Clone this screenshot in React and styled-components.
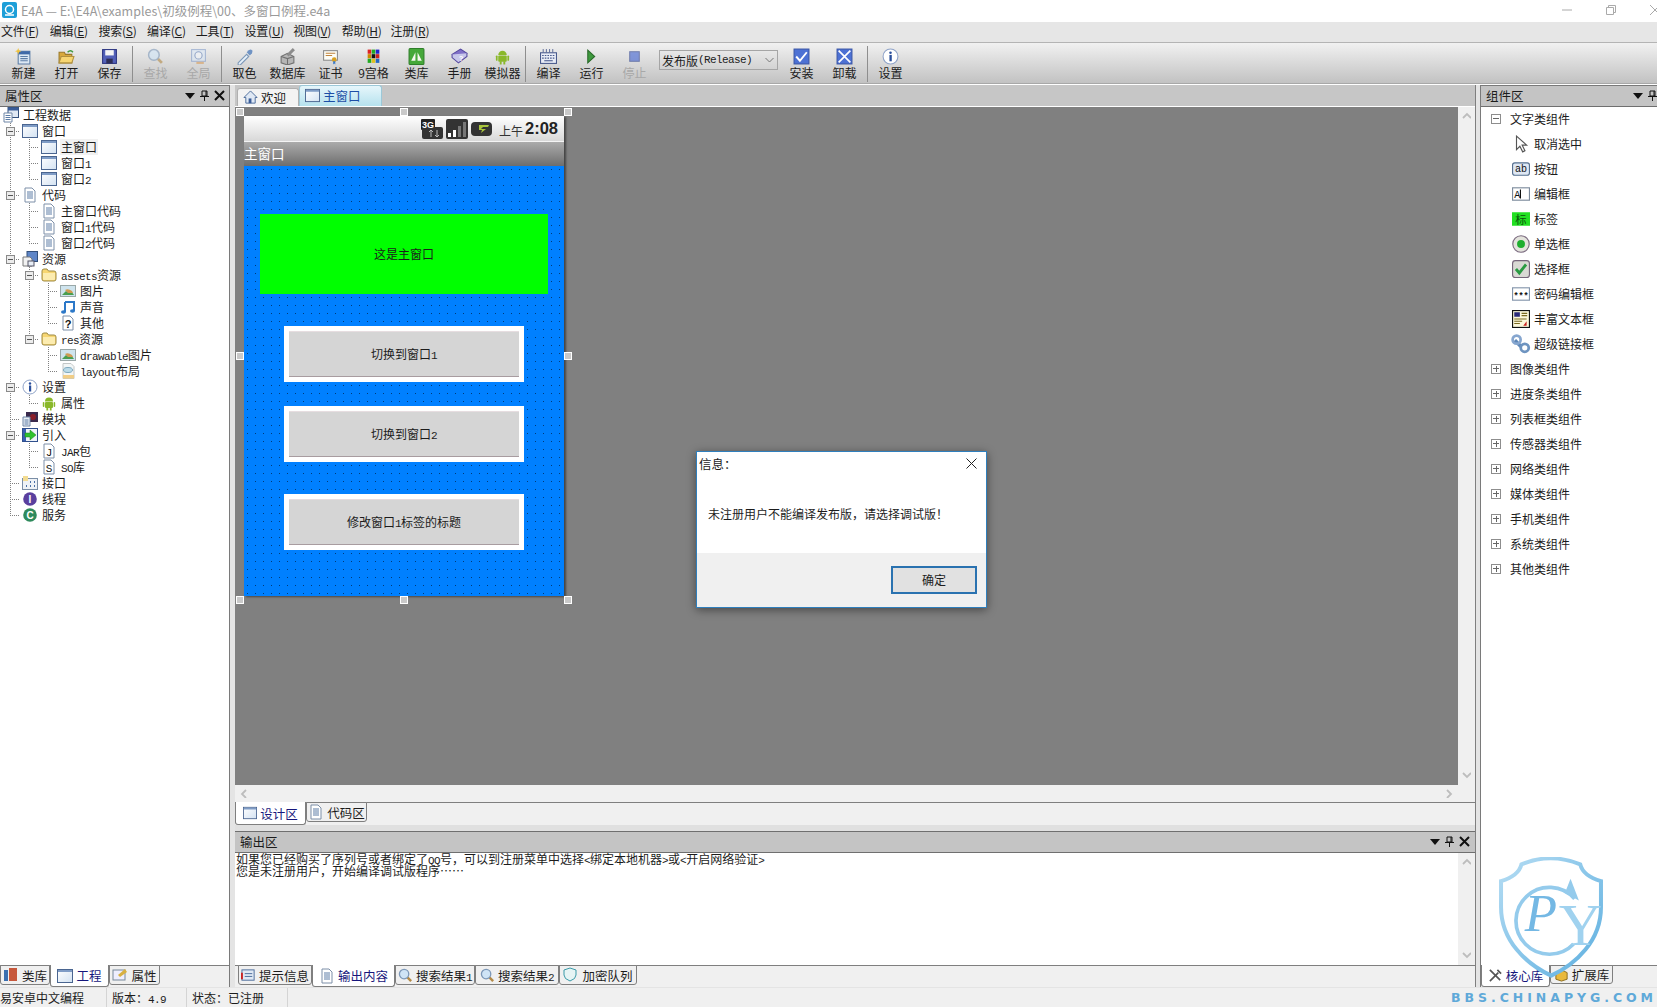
import React from 'react';
import styled, { createGlobalStyle } from 'styled-components';

const GlobalStyle = createGlobalStyle`
  html, body { margin: 0; padding: 0; background: #f0f0f0; }
  body { font-family: "Noto Sans CJK SC", "Liberation Sans", sans-serif; font-size: 12px; color: #1c1c1c; }
  * { box-sizing: border-box; }
`;

const Page = styled.div`
  position: relative;
  width: 1657px;
  height: 1007px;
  overflow: hidden;
  display: flex;
  flex-direction: column;
`;

const TitleBar = styled.div`
  height: 22px;
  background: #fff;
  display: flex;
  align-items: center;
  padding: 0 0 2px 2px;
  gap: 4px;
  color: #9a9a9a;
  font-size: 12.5px;
`;

const WindowButtons = styled.div`
  margin-left: auto;
  display: flex;
  align-items: center;
  gap: 34px;
  margin-right: -3px;
`;

const MenuBar = styled.div`
  height: 21px;
  background: #e6e6e6;
  border-bottom: 1px solid #b4b4b4;
  display: flex;
  align-items: center;
  padding: 0 0 3px 1px;
`;

const MenuItem = styled.span`
  width: 48.7px;
  white-space: nowrap;
  font-size: 12px;
  letter-spacing: -0.2px;
`;

const ToolBar = styled.div`
  height: 41px;
  flex: none;
  margin-bottom: 1px;
  background: linear-gradient(#f1f1f1, #c2c2c2);
  border-bottom: 1px solid #a8a8a8;
  box-shadow: 0 1px 0 #fff;
  display: flex;
  align-items: flex-start;
  padding-left: 2px;
`;

const ToolButton = styled.div`
  width: 43px;
  height: 40px;
  display: flex;
  flex-direction: column;
  align-items: center;
  padding-top: 5px;
  color: ${(p) => (p.$off ? '#a8a8a8' : '#1c1c1c')};
  svg { width: 17px; height: 17px; opacity: ${(p) => (p.$off ? 0.6 : 1)}; }
`;

const ToolLabel = styled.span`
  line-height: 15px;
  white-space: nowrap;
`;

const ToolSep = styled.div`
  width: 1px;
  height: 36px;
  margin: 3px 1px 0;
  background: #8e8e8e;
`;

const Combo = styled.div`
  width: 119px;
  height: 20px;
  margin: 7px 2px 0 3px;
  border: 1px solid #a5a5a5;
  display: flex;
  align-items: center;
  padding-left: 2px;
  white-space: nowrap;
  svg { margin-left: auto; margin-right: 3px; }
`;

const Mono = styled.span`
  font-family: "Liberation Mono", monospace;
  font-size: 11px;
  letter-spacing: -0.6px;
  line-height: 0;
`;

const Workspace = styled.div`
  flex: 1;
  display: flex;
  min-height: 0;
  background: #e4e4e4;
`;

const SidePanel = styled.div`
  width: ${(p) => p.$w}px;
  flex: none;
  display: flex;
  flex-direction: column;
  background: #fff;
  border-right: ${(p) => (p.$right ? 0 : '1px solid #7a7a7a')};
  border-left: ${(p) => (p.$right ? '1px solid #7a7a7a' : 0)};
  border-top: 1px solid #7a7a7a;
  overflow: hidden;
`;

const Gutter = styled.div`
  width: ${(p) => p.$w}px;
  flex: none;
`;

const PanelHeader = styled.div`
  height: 21px;
  flex: none;
  background: #c4c4c4;
  border-bottom: 1px solid #6f6f6f;
  display: flex;
  align-items: center;
  justify-content: space-between;
  padding: 0 4px 1px 5px;
  font-size: 12.5px;
`;

const DockButtons = styled.div`
  display: flex;
  align-items: center;
  gap: 4px;
  flex: none;
  margin-right: ${(p) => p.$bleed || 0}px;
`;

const TreeArea = styled.div`
  flex: 1;
`;

const TreeRow = styled.div`
  height: 16px;
  display: flex;
  align-items: center;
  padding-left: 1px;
`;

const dots = 'repeating-linear-gradient(to bottom, #808080 0 1px, transparent 1px 2px)';
const dotsH = 'repeating-linear-gradient(to right, #808080 0 1px, transparent 1px 2px)';

const GuideCell = styled.div`
  width: 19px;
  height: 16px;
  flex: none;
  display: flex;
  align-items: center;
  justify-content: center;
  background-repeat: no-repeat;
  background-image: ${(p) => {
    const k = p.$kind;
    const layers = [];
    if ('ITB'.includes(k)) layers.push(dots);
    if ('LK'.includes(k)) layers.push(dots);
    if ('TLBK'.includes(k)) layers.push(dotsH);
    return layers.length ? layers.join(',') : 'none';
  }};
  background-size: ${(p) => {
    const k = p.$kind;
    if ('ITB'.includes(k)) return '1px 100%, 10px 1px';
    if ('LK'.includes(k)) return '1px 8px, 10px 1px';
    return 'auto';
  }};
  background-position: 9px 0, 9px 8px;
`;

const Expander = styled.span`
  width: 9px;
  height: 9px;
  border: 1px solid #8a8a8a;
  background: #ececec;
  display: flex;
  align-items: center;
  justify-content: center;
  &::before { content: ''; width: 5px; height: 1px; background: #555; }
`;

const IconCell = styled.div`
  width: 19px;
  height: 16px;
  flex: none;
  display: flex;
  align-items: center;
  justify-content: center;
`;

const TreeLabel = styled.span`
  margin-left: 2px;
  padding: 0 1px;
  line-height: 16px;
  white-space: nowrap;
  background: ${(p) => (p.$on ? '#f1f1f1' : 'transparent')};
`;

const TabRow = styled.div`
  height: ${(p) => p.$h || 22}px;
  flex: none;
  display: flex;
  align-items: flex-start;
  background: #f0f0f0;
  border-top: 1px solid #7f7f7f;
  padding-left: ${(p) => p.$pad || 0}px;
`;

const BottomTab = styled.div`
  width: ${(p) => p.$w}px;
  height: ${(p) => (p.$on ? p.$tall || 22 : (p.$tall || 22) - 2)}px;
  margin-top: -1px;
  display: flex;
  align-items: center;
  justify-content: center;
  gap: 3px;
  white-space: nowrap;
  background: ${(p) => (p.$on ? '#fff' : '#f0f0f0')};
  color: ${(p) => (p.$on ? '#16167c' : '#1c1c1c')};
  border: 1px solid #7f7f7f;
  border-top: ${(p) => (p.$on ? '0' : '1px solid #7f7f7f')};
  border-radius: 0 0 3px 3px;
  font-size: 12.5px;
`;

const Center = styled.div`
  width: 1241px;
  flex: none;
  display: flex;
  flex-direction: column;
  border-right: 1px solid #7f7f7f;
`;

const DocStrip = styled.div`
  height: 22px;
  flex: none;
  background: #c6c6c6;
  border-bottom: 1px solid #fff;
  display: flex;
  align-items: flex-end;
  padding-left: 2px;
`;

const DocTab = styled.div`
  width: ${(p) => p.$w}px;
  height: ${(p) => (p.$on ? 21 : 18)}px;
  display: flex;
  align-items: center;
  gap: 3px;
  padding: 0 0 1px 5px;
  border: 1px solid ${(p) => (p.$on ? '#9cc8d8' : '#b0b0b0')};
  border-bottom: 0;
  border-radius: 3px 3px 0 0;
  background: ${(p) => (p.$on ? 'linear-gradient(#e6f6fb, #b6e2ee)' : '#f3f3f3')};
  color: ${(p) => (p.$on ? '#1c4ea6' : '#1c1c1c')};
  font-size: 12.5px;
`;

const DesignRow = styled.div`
  height: 678px;
  flex: none;
  display: flex;
`;

const Canvas = styled.div`
  position: relative;
  flex: 1;
  background: #808080;
  padding: 9px 0 0 9px;
`;

const ScrollV = styled.div`
  width: 17px;
  flex: none;
  background: #f0f0f0;
  display: flex;
  flex-direction: column;
  align-items: center;
  justify-content: space-between;
  padding: 5px 0;
`;

const ScrollH = styled.div`
  height: 17px;
  flex: none;
  background: #f0f0f0;
  display: flex;
  align-items: center;
  justify-content: space-between;
  padding: 0 21px 0 5px;
`;

const Phone = styled.div`
  position: relative;
  width: 320px;
  height: 480px;
  display: flex;
  flex-direction: column;
  box-shadow: 2px 1px 2px #444;
`;

const Handle = styled.span`
  position: absolute;
  left: ${(p) => p.$x}px;
  top: ${(p) => p.$y}px;
  width: 8px;
  height: 8px;
  background: #c9c9c9;
  border: 1px solid #fff;
`;

const PhoneStatus = styled.div`
  height: 25px;
  flex: none;
  background: linear-gradient(#fff, #d8d8d8);
  display: flex;
  align-items: center;
  justify-content: flex-end;
  gap: 3px;
  padding-right: 6px;
`;

const AmPm = styled.span`
  font-size: 12px;
  margin: 3px -1px 0 3px;
  color: #333;
`;

const Clock = styled.span`
  font-family: "Liberation Sans", sans-serif;
  font-weight: bold;
  font-size: 16.5px;
  color: #222;
`;

const PhoneTitle = styled.div`
  height: 25px;
  flex: none;
  background: linear-gradient(#ababab, #6e6e6e);
  color: #fff;
  font-size: 13.5px;
  line-height: 22px;
  border-top: 1px solid #f4f4f4;
`;

const PhoneBody = styled.div`
  flex: 1;
  background-color: #0080ff;
  background-image: radial-gradient(circle at 3.5px 3.5px, #003a78 0.8px, transparent 1px);
  background-size: 8px 8px;
  display: flex;
  flex-direction: column;
  align-items: center;
`;

const GreenLabel = styled.div`
  width: 288px;
  height: 80px;
  margin-top: 48px;
  padding-bottom: 2px;
  background: #00ff00;
  display: flex;
  align-items: center;
  justify-content: center;
`;

const FormButton = styled.div`
  width: 240px;
  height: 56px;
  margin-top: ${(p) => p.$top}px;
  padding-bottom: 2px;
  background: #d5d5d5;
  border: 5px solid #fff;
  display: flex;
  align-items: center;
  justify-content: center;
  box-shadow: inset 0 1px 0 #e6dde0, inset 0 -1px 0 #a89ca0;
`;

const Dialog = styled.div`
  position: absolute;
  left: 461px;
  top: 344px;
  width: 291px;
  height: 157px;
  background: #fff;
  border: 1px solid #2f7fbd;
  box-shadow: 0 2px 9px rgba(0, 0, 0, 0.45);
  display: flex;
  flex-direction: column;
`;

const DialogTop = styled.div`
  height: 24px;
  display: flex;
  align-items: center;
  justify-content: space-between;
  padding: 0 9px 2px 2px;
  font-size: 12.5px;
`;

const DialogText = styled.div`
  flex: 1;
  padding: 30px 0 0 11px;
  line-height: 16px;
  font-size: 12px;
  white-space: nowrap;
`;

const DialogFoot = styled.div`
  height: 54px;
  background: #f0f0f0;
  display: flex;
  align-items: center;
  justify-content: flex-end;
  padding: 0 9px 0 0;
`;

const DialogButton = styled.div`
  width: 86px;
  height: 28px;
  padding-bottom: 2px;
  background: #e1e1e1;
  border: 2px solid #2a72b0;
  display: flex;
  align-items: center;
  justify-content: center;
`;

const CodeRow = styled.div`
  flex: 1;
  display: flex;
  background: #fff;
  min-height: 0;
`;

const OutputText = styled.div`
  flex: 1;
  padding: 0 0 0 1px;
  line-height: 12px;
  white-space: nowrap;
`;

const DarkGap = styled.div`
  height: 6px;
  flex: none;
  background: #e0e0e0;
`;

const OutputHeader = styled(PanelHeader)`
  border-top: 1px solid #6f6f6f;
  height: 22px;
  padding-right: 5px;
`;

const CompRow = styled.div`
  height: 25px;
  display: flex;
  align-items: center;
  padding: 0 0 2px ${(p) => (p.$child ? 30 : 10)}px;
  gap: ${(p) => (p.$child ? 3 : 9)}px;
  font-size: 12px;
`;

const PlusBox = styled.span`
  width: 10px;
  height: 10px;
  border: 1px solid #8d8d8d;
  background:
    linear-gradient(#666, #666) center / 6px 1px no-repeat
    ${(p) => (p.$open ? '' : ', linear-gradient(#666, #666) center / 1px 6px no-repeat')};
`;

const ChildIcon = styled.span`
  width: 20px;
  display: flex;
  justify-content: center;
`;

const StatusBar = styled.div`
  height: 20px;
  flex: none;
  background: #f0f0f0;
  display: flex;
  align-items: center;
  border-top: 1px solid #e4e4e4;
  font-size: 12px;
`;

const StatusCell = styled.div`
  width: ${(p) => p.$w}px;
  padding-left: ${(p) => p.$pad || 0}px;
  height: 100%;
  display: flex;
  align-items: center;
  border-right: 1px solid #d4d4d4;
  white-space: nowrap;
`;

const SiteMark = styled.div`
  margin-left: auto;
  font-family: "DejaVu Sans", sans-serif;
  font-weight: bold;
  font-size: 12.5px;
  letter-spacing: 3.95px;
  color: #5fa9d9;
  white-space: nowrap;
`;

const Shield = styled.svg`
  position: absolute;
  left: 1499px;
  top: 857px;
  width: 104px;
  height: 121px;
  pointer-events: none;
`;

/* ---------- icons ---------- */
const I = ({ s = 16, children }) => (
  <svg width={s} height={s} viewBox="0 0 16 16">{children}</svg>
);

const WinIcon = ({ s }) => (
  <I s={s}>
    <defs>
      <linearGradient id="wg" x1="0" y1="0" x2="1" y2="1"><stop offset="0" stopColor="#fff" /><stop offset="1" stopColor="#d3e2f2" /></linearGradient>
    </defs>
    <rect x="0.5" y="1.5" width="15" height="13" fill="url(#wg)" stroke="#4a6590" />
    <rect x="1" y="2" width="14" height="2" fill="#7f9cc6" />
  </I>
);
const DocIcon = () => (
  <I>
    <path d="M3 1h7l3 3v11H3z" fill="#fff" stroke="#7d8fa8" />
    <path d="M5 5h6M5 7h6M5 9h6M5 11h6" stroke="#5c7da6" />
  </I>
);
const AppIcon = () => (
  <I>
    <rect x="5" y="0.5" width="10.5" height="10" fill="#dfe8f3" stroke="#33507c" />
    <rect x="5" y="0.5" width="10.5" height="3" fill="#3a5c98" />
    <path d="M1 6h8v9H1z" fill="#fff" stroke="#6f86a6" />
    <path d="M2.5 8.5h5M2.5 10.5h5M2.5 12.5h5" stroke="#5c7da6" />
  </I>
);
const ResIcon = () => (
  <I>
    <rect x="5" y="0.5" width="10.5" height="10" fill="#5f86c8" stroke="#33507c" />
    <path d="M1 6h7l2 2v7H1z" fill="#f2f2f2" stroke="#7a7a7a" />
    <rect x="6" y="10" width="6" height="5" fill="#e8eef6" stroke="#556" />
  </I>
);
const FolderIcon = () => (
  <I>
    <path d="M1 4q0-2 2-2h3l1.5 2H13q2 0 2 2v6q0 2-2 2H3q-2 0-2-2z" fill="#f7d672" stroke="#9e8a45" />
    <path d="M2 6h12v6q0 1-1 1H3q-1 0-1-1z" fill="#fcecb0" />
  </I>
);
const ImageIcon = () => (
  <I>
    <rect x="0.5" y="2.5" width="15" height="11" fill="#cfe4ee" stroke="#9aa8a8" />
    <path d="M2 12l4-4 3 2 2-2 3 4z" fill="#4a9e50" />
    <path d="M5 7q3-2 7 1l1 2H8z" fill="#cf9b52" />
  </I>
);
const MusicIcon = () => (
  <I>
    <path d="M5 3h9v9M5 3v10" fill="none" stroke="#2c78c8" strokeWidth="2" />
    <ellipse cx="3.5" cy="13" rx="2.5" ry="1.8" fill="#2c78c8" />
    <ellipse cx="12.5" cy="12" rx="2.5" ry="1.8" fill="#2c78c8" />
  </I>
);
const QuestionIcon = () => (
  <I>
    <path d="M3 1h7l3 3v11H3z" fill="#fff" stroke="#7d8fa8" />
    <text x="8" y="13" textAnchor="middle" fontSize="11" fontWeight="bold" fontFamily="Liberation Sans" fill="#111">?</text>
  </I>
);
const LayoutIcon = () => (
  <I>
    <path d="M3 0.5h8l3 3v12H3z" fill="#f2f6f6" stroke="#c2c6c6" />
    <ellipse cx="8" cy="7" rx="4.5" ry="2.5" fill="#bcdcea" stroke="#7da8be" />
    <rect x="3" y="12" width="11" height="3.5" fill="#f1cd86" />
  </I>
);
const InfoIcon = ({ s }) => (
  <I s={s}>
    <circle cx="8" cy="8" r="7" fill="#fff" stroke="#8fa3c8" />
    <circle cx="8" cy="4.5" r="1.2" fill="#2a4f9c" />
    <rect x="7" y="6.5" width="2.2" height="6" fill="#2a4f9c" />
  </I>
);
const AndroidIcon = ({ s }) => (
  <I s={s}>
    <path d="M4 6.5a4 4 0 0 1 8 0z" fill="#8ab82a" />
    <rect x="4" y="7" width="8" height="6" rx="1" fill="#8ab82a" />
    <rect x="1.8" y="7" width="1.6" height="5" rx="0.8" fill="#8ab82a" />
    <rect x="12.6" y="7" width="1.6" height="5" rx="0.8" fill="#8ab82a" />
    <rect x="5.4" y="12.5" width="1.8" height="3" fill="#8ab82a" />
    <rect x="8.8" y="12.5" width="1.8" height="3" fill="#8ab82a" />
  </I>
);
const ModuleIcon = () => (
  <I>
    <rect x="4" y="1" width="12" height="10" fill="#3a2a4c" />
    <circle cx="11" cy="6" r="3" fill="#8a1f2a" />
    <path d="M1 6h7v9H1z" fill="#e9eef4" stroke="#6f86a6" />
    <path d="M2.5 9h4M2.5 11h4M2.5 13h4" stroke="#5c7da6" />
  </I>
);
const ImportIcon = () => (
  <I>
    <rect x="0.5" y="1.5" width="15" height="13" fill="#eef3fa" stroke="#2f4f8c" />
    <rect x="1" y="2" width="3" height="12" fill="#3a5fb0" />
    <path d="M3 6h5V3l6 5-6 5v-3H3z" fill="#2fc22f" stroke="#1d7e1d" strokeWidth="0.5" />
  </I>
);
const LetterDoc = ({ c }) => (
  <I>
    <path d="M3 1h7l3 3v11H3z" fill="#fff" stroke="#7d8fa8" />
    <text x="8" y="12.5" textAnchor="middle" fontSize="11" fontFamily="Liberation Mono" fill="#111">{c}</text>
  </I>
);
const PortIcon = () => (
  <I>
    <rect x="0.5" y="3.5" width="15" height="11" fill="#eef2f6" stroke="#7a8ea6" />
    <path d="M1 1h5v5H1z" fill="#f3dc92" />
    <path d="M8 7h2M12 7h2M4 11h2M8 11h2M12 11h2" stroke="#4a6fa6" strokeWidth="2" strokeDasharray="1 1" />
  </I>
);
const RoundLetter = ({ c, bg }) => (
  <I>
    <circle cx="8" cy="8" r="6.8" fill={bg} />
    <text x="8" y="11.5" textAnchor="middle" fontSize="10" fontWeight="bold" fontFamily="Liberation Sans" fill="#fff">{c}</text>
  </I>
);

/* toolbar */
const NewIcon = () => (
  <I s={19}>
    <path d="M3 3h11v12H3z" fill="#dce8f4" stroke="#5c7da6" />
    <rect x="3" y="3" width="11" height="3" fill="#3f6aa8" />
    <path d="M5 8h7M5 10h7M5 12h7" stroke="#5c7da6" />
    <path d="M3 0l.8 2.2L6 3l-2.2.8L3 6l-.8-2.2L0 3l2.2-.8z" fill="#f0c23c" />
  </I>
);
const OpenIcon = () => (
  <I s={19}>
    <path d="M1 4h5l1 2h6v8H1z" fill="#d8a93c" stroke="#9a7a2a" />
    <path d="M3 8h12l-2 6H1z" fill="#f7d672" stroke="#b1913f" />
    <path d="M9 4q3-3 5 0" fill="none" stroke="#3f9a3f" strokeWidth="1.4" />
  </I>
);
const SaveIcon = () => (
  <I s={19}>
    <rect x="1.5" y="1.5" width="13" height="13" fill="#5260b8" stroke="#2c3580" />
    <rect x="4" y="2" width="8" height="5" fill="#f4f4f4" />
    <rect x="5" y="10" width="6" height="4.5" fill="#2d2d55" />
  </I>
);
const SearchIcon = ({ s = 19 }) => (
  <I s={s}>
    <path d="M9 9l5 5" stroke="#b38a46" strokeWidth="2.6" />
    <circle cx="6.5" cy="6.5" r="5" fill="#cfe4f6" stroke="#7d98b8" strokeWidth="1.4" />
  </I>
);
const GlobalIcon = () => (
  <I s={19}>
    <rect x="1.5" y="1.5" width="13" height="11" fill="#dbe8f6" stroke="#7d98c8" />
    <circle cx="8" cy="7" r="3.4" fill="#f2f6fb" stroke="#5f7fb8" />
    <path d="M6 14h7" stroke="#d89c58" strokeWidth="2" />
  </I>
);
const PickerIcon = () => (
  <I s={19}>
    <path d="M2 14l8-8 2 2-8 8H2z" fill="#e6f1fa" stroke="#7d98b8" />
    <path d="M10 4l2-2q2-1 3 0t0 3l-2 2z" fill="#6f93c4" />
  </I>
);
const DatabaseIcon = () => (
  <I s={19}>
    <path d="M2 8l6-3 6 3v6l-6 2-6-2z" fill="#b6b6b6" stroke="#707070" />
    <path d="M2 8l6 2 6-2M8 10v6" fill="none" stroke="#707070" />
    <path d="M7 6l6-6 2 2-6 6z" fill="#8c8c8c" />
  </I>
);
const CertIcon = () => (
  <I s={19}>
    <rect x="1.5" y="2.5" width="13" height="9" fill="#fdfdf6" stroke="#8a8a8a" />
    <path d="M3.5 5h9M3.5 7h6" stroke="#c0833c" />
    <circle cx="11.5" cy="11" r="2.2" fill="#d9a020" />
    <path d="M10.5 12.5v3l1-1 1 1v-3" fill="#3a7ac8" />
  </I>
);
const GridIcon = () => {
  const colors = ['#d22', '#2a2', '#22c', '#c80', '#111', '#c22', '#2a2', '#e0c020', '#2468c8'];
  return (
    <I s={19}>
      {colors.map((c, i) => (
        <rect key={i} x={2.5 + (i % 3) * 3.8} y={1.5 + Math.floor(i / 3) * 4.3} width="3.4" height="3.9" fill={c} />
      ))}
    </I>
  );
};
const LibIcon = () => (
  <I s={19}>
    <rect x="1" y="0.5" width="14" height="15" rx="1" fill="#46a83a" stroke="#2f7f2a" />
    <path d="M3 12l4-8v8zM9 12V4l4 8z" fill="#f6f6f0" />
  </I>
);
const BookIcon = () => (
  <I s={19}>
    <path d="M1 6l8-5 6 4-8 6z" fill="#8070c8" stroke="#5548a0" />
    <path d="M1 6v3l6 5 8-6V5" fill="#c7c7ea" stroke="#5548a0" />
    <text x="9.5" y="12.5" fontSize="7" fontWeight="bold" textAnchor="middle" fontFamily="Liberation Sans" fill="#fff">?</text>
  </I>
);
const KeysIcon = () => (
  <I s={19}>
    <rect x="0.5" y="4.5" width="15" height="10" fill="#e9edf7" stroke="#48598c" />
    <path d="M2 7h12M2 9.500h12" stroke="#48598c" strokeDasharray="1.5 1" />
    <path d="M4 12h8" stroke="#48598c" />
    <path d="M3 1v3M6 1v3M9 1v3M12 1v3" stroke="#48598c" strokeWidth="0.8" />
  </I>
);
const RunIcon = () => (
  <I s={19}>
    <path d="M4.500 2L11 8l-6.500 6z" fill="#3e9a3e" stroke="#2a6a2a" />
  </I>
);
const StopIcon = () => (
  <I s={19}>
    <rect x="3.500" y="3.500" width="9" height="9" fill="#3f62d2" stroke="#2a3f8c" />
  </I>
);
const InstallIcon = ({ x }) => (
  <I s={19}>
    <rect x="1" y="1" width="14" height="14" fill="#4d71d4" stroke="#3a56a8" />
    {x
      ? <path d="M2.500 2.500l11 11M13.500 2.500l-11 11" stroke="#fff" strokeWidth="1.6" />
      : <path d="M3 8l3.500 4L13 4" fill="none" stroke="#fff" strokeWidth="1.8" />}
  </I>
);

/* dock glyphs */
const DockGlyphs = ({ bleed }) => (
  <DockButtons $bleed={bleed}>
    <svg width="10" height="6" viewBox="0 0 10 6"><path d="M0 0h10L5 6z" fill="#111" /></svg>
    <svg width="11" height="11" viewBox="0 0 11 11"><path d="M3 1h5v5H3zM1 6.500h9M5.500 7v4M7 1v5" fill="none" stroke="#111" /></svg>
    <svg width="11" height="11" viewBox="0 0 11 11"><path d="M1 1l9 9M10 1l-9 9" stroke="#111" strokeWidth="2" /></svg>
  </DockButtons>
);

const Chev = ({ dir }) => {
  const paths = { up: 'M1 6l4-4 4 4', down: 'M1 2l4 4 4-4', left: 'M6 1L2 5l4 4', right: 'M2 1l4 4-4 4' };
  return (
    <svg width="9" height="9" viewBox="0 0 9 9">
      <path d={paths[dir]} fill="none" stroke="#bdbdbd" strokeWidth="1.8" />
    </svg>
  );
};

/* ---------- data ---------- */
const MENU = [['文件', 'F'], ['编辑', 'E'], ['搜索', 'S'], ['编译', 'C'], ['工具', 'T'], ['设置', 'U'], ['视图', 'V'], ['帮助', 'H'], ['注册', 'R']];

const TREE = [
  { g: '', icon: <AppIcon />, label: '工程数据' },
  { g: 'B', icon: <WinIcon />, label: '窗口' },
  { g: 'IT', icon: <WinIcon />, label: '主窗口', on: true },
  { g: 'IT', icon: <WinIcon />, label: <>窗口<Mono>1</Mono></> },
  { g: 'IL', icon: <WinIcon />, label: <>窗口<Mono>2</Mono></> },
  { g: 'B', icon: <DocIcon />, label: '代码' },
  { g: 'IT', icon: <DocIcon />, label: '主窗口代码' },
  { g: 'IT', icon: <DocIcon />, label: <>窗口<Mono>1</Mono>代码</> },
  { g: 'IL', icon: <DocIcon />, label: <>窗口<Mono>2</Mono>代码</> },
  { g: 'B', icon: <ResIcon />, label: '资源' },
  { g: 'IB', icon: <FolderIcon />, label: <><Mono>assets</Mono>资源</> },
  { g: 'IIT', icon: <ImageIcon />, label: '图片' },
  { g: 'IIT', icon: <MusicIcon />, label: '声音' },
  { g: 'IIL', icon: <QuestionIcon />, label: '其他' },
  { g: 'IK', icon: <FolderIcon />, label: <><Mono>res</Mono>资源</> },
  { g: 'I T', icon: <ImageIcon />, label: <><Mono> drawable</Mono>图片</> },
  { g: 'I L', icon: <LayoutIcon />, label: <><Mono>layout</Mono>布局</> },
  { g: 'B', icon: <InfoIcon />, label: '设置' },
  { g: 'IL', icon: <AndroidIcon />, label: '属性' },
  { g: 'T', icon: <ModuleIcon />, label: '模块' },
  { g: 'B', icon: <ImportIcon />, label: '引入' },
  { g: 'IT', icon: <LetterDoc c="J" />, label: <><Mono>JAR</Mono>包</> },
  { g: 'IL', icon: <LetterDoc c="S" />, label: <><Mono>SO</Mono>库</> },
  { g: 'T', icon: <PortIcon />, label: '接口' },
  { g: 'T', icon: <RoundLetter c="I" bg="#5a3f9e" />, label: '线程' },
  { g: 'L', icon: <RoundLetter c="C" bg="#2f8a5c" />, label: '服务' },
];

const TOOLS = [
  { l: '新建', i: <NewIcon /> }, { l: '打开', i: <OpenIcon /> }, { l: '保存', i: <SaveIcon /> }, 'sep',
  { l: '查找', i: <SearchIcon />, off: true }, { l: '全局', i: <GlobalIcon />, off: true }, 'sep',
  { l: '取色', i: <PickerIcon /> }, { l: '数据库', i: <DatabaseIcon /> }, { l: '证书', i: <CertIcon /> },
  { l: '9宫格', i: <GridIcon /> }, { l: '类库', i: <LibIcon /> }, { l: '手册', i: <BookIcon /> },
  { l: '模拟器', i: <AndroidIcon s={19} /> }, 'sep',
  { l: '编译', i: <KeysIcon /> }, { l: '运行', i: <RunIcon /> }, { l: '停止', i: <StopIcon />, off: true }, 'combo',
  { l: '安装', i: <InstallIcon /> }, { l: '卸载', i: <InstallIcon x /> }, 'sep',
  { l: '设置', i: <InfoIcon s={19} /> },
];

const HANDLES = [[-8, -8], [156, -8], [320, -8], [-8, 236], [320, 236], [-8, 480], [156, 480], [320, 480]];

const Cursor = () => (
  <I s={18}><path d="M4 1v12l3-3 2.500 5 2-1-2.500-5h4z" fill="#fff" stroke="#555" /></I>
);
const AbIcon = () => (
  <I s={18}>
    <rect x="0.500" y="2.500" width="15" height="11" rx="2" fill="#dfe8f4" stroke="#56708f" />
    <text x="8" y="11" textAnchor="middle" fontSize="9" fontFamily="Liberation Mono" fill="#111">ab</text>
  </I>
);
const EditIcon = () => (
  <I s={18}>
    <rect x="0.500" y="2.500" width="15" height="11" fill="#fff" stroke="#7c8a9c" />
    <text x="2" y="11.500" fontSize="9" fontFamily="Liberation Mono" fill="#111">A</text>
    <path d="M7.500 4v8" stroke="#111" />
  </I>
);
const LabelIcon = () => (
  <I s={18}>
    <rect x="0" y="2" width="16" height="12" fill="#22e022" />
    <text x="8" y="12" textAnchor="middle" fontSize="10" fontFamily="Noto Sans CJK SC" fill="#0b500b">标</text>
  </I>
);
const RadioIcon = () => (
  <I s={18}>
    <circle cx="8" cy="8" r="7.300" fill="#e3e3dc" stroke="#7a6a7f" />
    <circle cx="8" cy="8" r="3.500" fill="#1fae2f" />
  </I>
);
const CheckIcon = () => (
  <I s={18}>
    <rect x="0.500" y="0.500" width="15" height="15" rx="2.500" fill="#d9d9d4" stroke="#75657a" />
    <path d="M3.500 8l3 3.500L12.500 4" fill="none" stroke="#2a9a42" strokeWidth="2.500" />
  </I>
);
const PassIcon = () => (
  <I s={18}>
    <rect x="0.500" y="2.500" width="15" height="11" fill="#fff" stroke="#8294aa" />
    <text x="8" y="12.500" textAnchor="middle" fontSize="7.500" fontFamily="Liberation Mono" fontWeight="bold" fill="#111">***</text>
  </I>
);
const RichIcon = () => (
  <I s={18}>
    <rect x="0.500" y="0.500" width="15" height="15" fill="#fbf7da" stroke="#111" />
    <rect x="2" y="2" width="5" height="4" fill="#2a2a7a" />
    <path d="M8.500 3h5M8.500 5h5M2 8h11M2 10h7M2 12h5" stroke="#7a6a20" />
    <path d="M10 14l3-4v4z" fill="#c22" />
  </I>
);
const LinkIcon = () => (
  <I s={20}>
    <path d="M3 5l5 5" stroke="#5e87b8" strokeWidth="3" />
    <circle cx="4.500" cy="4.500" r="3.200" fill="none" stroke="#86a6cf" strokeWidth="2.200" />
    <circle cx="11" cy="11" r="3.200" fill="none" stroke="#6e94c0" strokeWidth="2.200" />
  </I>
);

const COMP_TOP = [
  { i: <Cursor />, l: '取消选中' }, { i: <AbIcon />, l: '按钮' }, { i: <EditIcon />, l: '编辑框' },
  { i: <LabelIcon />, l: '标签' }, { i: <RadioIcon />, l: '单选框' }, { i: <CheckIcon />, l: '选择框' },
  { i: <PassIcon />, l: '密码编辑框' }, { i: <RichIcon />, l: '丰富文本框' }, { i: <LinkIcon />, l: '超级链接框' },
];
const COMP_GROUPS = ['图像类组件', '进度条类组件', '列表框类组件', '传感器类组件', '网络类组件', '媒体类组件', '手机类组件', '系统类组件', '其他类组件'];

const App = () => (
  <Page>
    <GlobalStyle />
    <TitleBar>
      <svg width="15" height="16" viewBox="0 0 15 16">
        <rect width="15" height="16" rx="2" fill="#1e9fd8" />
        <circle cx="7.500" cy="7.500" r="4" fill="none" stroke="#fff" strokeWidth="1.500" />
        <path d="M3 13h9" stroke="#fff" strokeWidth="1.500" />
      </svg>
      <span>E4A — E:\E4A\examples\初级例程\00、多窗口例程.e4a</span>
      <WindowButtons>
        <svg width="10" height="10" viewBox="0 0 10 10"><path d="M0 5h10" stroke="#aaa" /></svg>
        <svg width="10" height="10" viewBox="0 0 10 10"><path d="M.5 2.500h7v7h-7zM2.500 2.500v-2h7v7h-2" fill="none" stroke="#aaa" /></svg>
        <svg width="10" height="10" viewBox="0 0 10 10"><path d="M0 0l10 10M10 0L0 10" stroke="#aaa" /></svg>
      </WindowButtons>
    </TitleBar>

    <MenuBar>
      {MENU.map(([t, k]) => (
        <MenuItem key={k}>{t}(<u>{k}</u>)</MenuItem>
      ))}
    </MenuBar>

    <ToolBar>
      {TOOLS.map((t, idx) => {
        if (t === 'sep') return <ToolSep key={idx} />;
        if (t === 'combo') {
          return (
            <Combo key={idx}>
              发布版<Mono>(Release)</Mono>
              <svg width="9" height="6" viewBox="0 0 9 6"><path d="M.5 1l4 4 4-4" fill="none" stroke="#777" /></svg>
            </Combo>
          );
        }
        return (
          <ToolButton key={idx} $off={t.off}>
            {t.i}
            <ToolLabel>{t.l}</ToolLabel>
          </ToolButton>
        );
      })}
    </ToolBar>

    <Workspace>
      <SidePanel $w={230}>
        <PanelHeader>属性区<DockGlyphs /></PanelHeader>
        <TreeArea>
          {TREE.map((r, idx) => (
            <TreeRow key={idx}>
              {r.g.split('').map((k, j) => (
                <GuideCell key={j} $kind={k}>{'BK'.includes(k) && <Expander />}</GuideCell>
              ))}
              <IconCell>{r.icon}</IconCell>
              <TreeLabel $on={r.on}>{r.label}</TreeLabel>
            </TreeRow>
          ))}
        </TreeArea>
        <TabRow>
          <BottomTab $w={50}><I s={16}><rect x="1" y="3" width="4" height="11" fill="#3a6fb0" /><rect x="6" y="1" width="8" height="13" fill="#c7583c" /></I>类库</BottomTab>
          <BottomTab $w={59} $on><WinIcon s={16} />工程</BottomTab>
          <BottomTab $w={51}><I s={16}><rect x="1" y="3" width="12" height="10" fill="#eef" stroke="#789" /><path d="M6 8l7-6 2 3-7 5z" fill="#d8b040" /></I>属性</BottomTab>
        </TabRow>
      </SidePanel>
      <Gutter $w={5} />

      <Center>
        <DocStrip>
          <DocTab $w={62}>
            <I s={15}><path d="M8 1L1 8h2v6h10V8h2z" fill="#dfe8f4" stroke="#4a6a9a" /><rect x="6" y="9" width="3" height="5" fill="#3a5c98" /></I>
            欢迎
          </DocTab>
          <DocTab $w={83} $on><WinIcon s={15} />主窗口</DocTab>
        </DocStrip>

        <DesignRow>
          <Canvas>
            <Phone>
              <PhoneStatus>
                <svg width="22" height="20" viewBox="0 0 22 20">
                  <rect width="14" height="11" rx="1" fill="#222" />
                  <rect x="1" y="8" width="21" height="12" rx="2" fill="#333" />
                  <text x="1" y="9" fontSize="9" fontWeight="bold" fontFamily="Liberation Sans" fill="#fff">3G</text>
                  <path d="M8 13l2-2 2 2M10 11v7M14 16l2 2 2-2M16 18v-7" fill="none" stroke="#bbb" />
                </svg>
                <svg width="22" height="20" viewBox="0 0 22 20">
                  <rect width="22" height="20" rx="2" fill="#333" />
                  <path d="M2 14h3v4H2zM7 11h3v7H7z" fill="#fff" />
                  <path d="M12 7h3v11h-3zM17 3h3v15h-3z" fill="#777" />
                </svg>
                <svg width="22" height="16" viewBox="0 0 22 16">
                  <rect y="1" width="21" height="14" rx="4" fill="#333" />
                  <path d="M8 4h10l-1 2h-5l-2 2h5l-5 4 1-3H8z" fill="#a8c43c" />
                </svg>
                <AmPm>上午</AmPm>
                <Clock>2:08</Clock>
              </PhoneStatus>
              <PhoneTitle>主窗口</PhoneTitle>
              <PhoneBody>
                <GreenLabel>这是主窗口</GreenLabel>
                <FormButton $top={32}><span>切换到窗口<Mono>1</Mono></span></FormButton>
                <FormButton $top={24}><span>切换到窗口<Mono>2</Mono></span></FormButton>
                <FormButton $top={32}><span>修改窗口<Mono>1</Mono>标签的标题</span></FormButton>
              </PhoneBody>
              {HANDLES.map(([x, y]) => <Handle key={`${x}-${y}`} $x={x} $y={y} />)}
            </Phone>

            <Dialog>
              <DialogTop>
                信息：
                <svg width="11" height="11" viewBox="0 0 11 11"><path d="M.5.500l10 10M10.500.500l-10 10" stroke="#222" /></svg>
              </DialogTop>
              <DialogText>未注册用户不能编译发布版，请选择调试版！</DialogText>
              <DialogFoot><DialogButton>确定</DialogButton></DialogFoot>
            </Dialog>
          </Canvas>
          <ScrollV><Chev dir="up" /><Chev dir="down" /></ScrollV>
        </DesignRow>
        <ScrollH><Chev dir="left" /><Chev dir="right" /></ScrollH>

        <TabRow $h={23}>
          <BottomTab $w={71} $tall={23} $on><WinIcon s={14} />设计区</BottomTab>
          <BottomTab $w={61} $tall={22}><DocIcon />代码区</BottomTab>
        </TabRow>
        <DarkGap />

        <OutputHeader>输出区<DockGlyphs /></OutputHeader>
        <CodeRow>
          <OutputText>
            如果您已经购买了序列号或者绑定了<Mono>QQ</Mono>号，可以到注册菜单中选择<Mono>&lt;</Mono>绑定本地机器<Mono>&gt;</Mono>或<Mono>&lt;</Mono>开启网络验证<Mono>&gt;</Mono><br />
            您是未注册用户，开始编译调试版程序……
          </OutputText>
          <ScrollV><Chev dir="up" /><Chev dir="down" /></ScrollV>
        </CodeRow>

        <TabRow $pad={3}>
          <BottomTab $w={74}><I s={15}><rect x="1" y="2" width="13" height="11" fill="#dfe8f4" stroke="#4a6a9a" /><path d="M1 5v7" stroke="#c22" strokeWidth="2" /><path d="M4 6h8M4 9h8" stroke="#4a6a9a" /></I>提示信息</BottomTab>
          <BottomTab $w={83} $on><DocIcon />输出内容</BottomTab>
          <BottomTab $w={80}><SearchIcon s={15} /><span>搜索结果<Mono>1</Mono></span></BottomTab>
          <BottomTab $w={84}><SearchIcon s={15} /><span>搜索结果<Mono>2</Mono></span></BottomTab>
          <BottomTab $w={78}><I s={16}><path d="M7 1l6 2v5q0 4-6 6-6-2-6-6V3z" fill="#e6f4f4" stroke="#3a9aa8" /></I>加密队列</BottomTab>
        </TabRow>
      </Center>
      <Gutter $w={4} />

      <SidePanel $w={177} $right>
        <PanelHeader>组件区<DockGlyphs bleed={-20} /></PanelHeader>
        <TreeArea>
          <CompRow><PlusBox $open />文字类组件</CompRow>
          {COMP_TOP.map((c) => (
            <CompRow $child key={c.l}><ChildIcon>{c.i}</ChildIcon>{c.l}</CompRow>
          ))}
          {COMP_GROUPS.map((g) => <CompRow key={g}><PlusBox />{g}</CompRow>)}
        </TreeArea>
        <TabRow>
          <BottomTab $w={69} $on><I s={15}><path d="M2 14l9-9M10 2l4 4M2 2l11 11" stroke="#555" strokeWidth="1.800" /></I>核心库</BottomTab>
          <BottomTab $w={63} $tall={21}><I s={15}><path d="M2 6l6-3 6 3v7l-6 2-6-2z" fill="#e9b93c" stroke="#8a6a1a" /></I>扩展库</BottomTab>
        </TabRow>
      </SidePanel>
    </Workspace>

    <StatusBar>
      <StatusCell $w={107}>易安卓中文编程</StatusCell>
      <StatusCell $w={80} $pad={5}>版本：<span><Mono>4.9</Mono></span></StatusCell>
      <StatusCell $w={101} $pad={5}>状态：已注册</StatusCell>
      <SiteMark>BBS.CHINAPYG.COM</SiteMark>
    </StatusBar>

    <Shield viewBox="0 0 309 362">
      <defs>
        <linearGradient id="sh" x1="0" y1="0" x2="1" y2="1">
          <stop offset="0" stopColor="#b4dcf3" />
          <stop offset="1" stopColor="#5fb0e0" />
        </linearGradient>
      </defs>
      <path d="M66 22Q153-14 242 22 250 56 304 72L304 150C304 250 230 320 155 355 80 320 5 250 5 150L5 72Q58 56 66 22Z" fill="none" stroke="url(#sh)" strokeWidth="12" />
      <path d="M225 125A100 100 0 1 0 222 260" fill="none" stroke="#94cbec" strokeWidth="11" />
      <path d="M213 65l25 65-42-22z" fill="#94cbec" />
      <text x="178" y="264" fontSize="180" fontFamily="Liberation Serif" fill="#a0d2ef">Y</text>
      <text x="76" y="220" fontSize="158" fontStyle="italic" fontFamily="Liberation Serif" fill="#74b8e4">P</text>
    </Shield>
  </Page>
);

export default App;
